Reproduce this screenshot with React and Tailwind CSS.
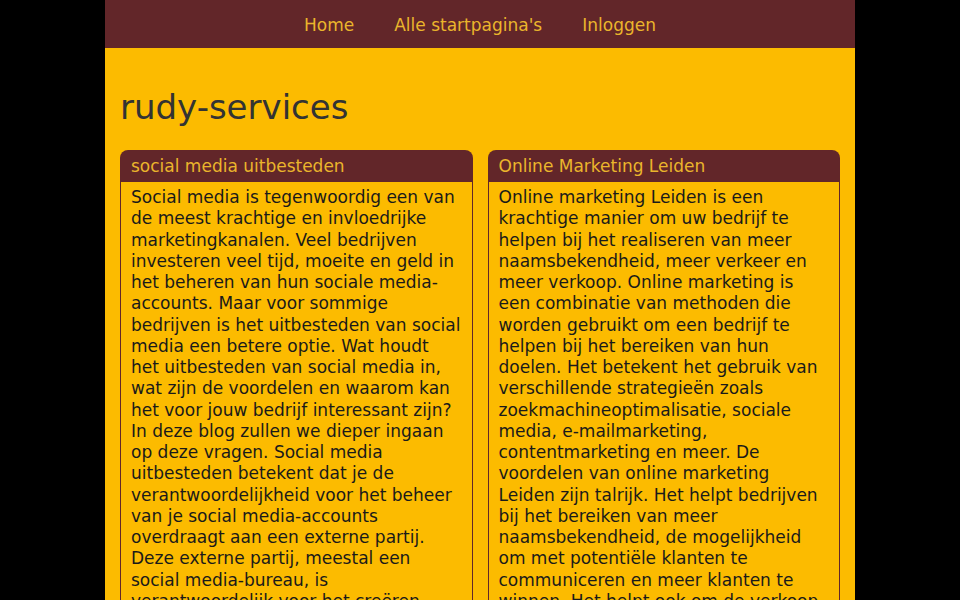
const posts = [
  {
    title: 'social media uitbesteden',
    body:
      'Social media is tegenwoordig een van de meest krachtige en invloedrijke marketingkanalen. Veel bedrijven investeren veel tijd, moeite en geld in het beheren van hun sociale media-accounts. Maar voor sommige bedrijven is het uitbesteden van social media een betere optie. Wat houdt het uitbesteden van social media in, wat zijn de voordelen en waarom kan het voor jouw bedrijf interessant zijn? In deze blog zullen we dieper ingaan op deze vragen. Social media uitbesteden betekent dat je de verantwoordelijkheid voor het beheer van je social media-accounts overdraagt aan een externe partij. Deze externe partij, meestal een social media-bureau, is verantwoordelijk voor het creëren, plaatsen en analyseren van content, het reageren op berichten en het bijhouden van de resultaten.',
  },
  {
    title: 'Online Marketing Leiden',
    body:
      'Online marketing Leiden is een krachtige manier om uw bedrijf te helpen bij het realiseren van meer naamsbekendheid, meer verkeer en meer verkoop. Online marketing is een combinatie van methoden die worden gebruikt om een bedrijf te helpen bij het bereiken van hun doelen. Het betekent het gebruik van verschillende strategieën zoals zoekmachineoptimalisatie, sociale media, e-mailmarketing, contentmarketing en meer. De voordelen van online marketing Leiden zijn talrijk. Het helpt bedrijven bij het bereiken van meer naamsbekendheid, de mogelijkheid om met potentiële klanten te communiceren en meer klanten te winnen. Het helpt ook om de verkoop te verhogen en de klanttevredenheid te verbeteren.',
  },
];

const App = () => {
  return (
    <div className="min-h-screen bg-black font-['DejaVu_Sans',sans-serif]">
      <div className="mx-auto w-[750px] min-h-screen bg-[#fcbb00]">
        <nav className="flex h-12 items-center justify-center gap-10 pt-[3px] bg-[#622629] text-[17px] text-[#eab52c]">
          <a href="#">Home</a>
          <a href="#">Alle startpagina's</a>
          <a href="#">Inloggen</a>
        </nav>

        <main className="px-[15px] pt-10">
          <h1 className="text-[34px] leading-[39px] text-[#333333]">rudy-services</h1>

          <div className="mt-[23px] grid grid-cols-2 gap-[15px]">
            {posts.map(post => (
              <div key={post.title}>
                <h2 className="rounded-t-lg bg-[#622629] px-[11px] pt-[6px] pb-[5px] text-[17px] leading-[20px] text-[#eab52c]">
                  {post.title}
                </h2>
                <p className="border border-[#622629] px-[10px] pt-[5px] pb-2 text-[17px] leading-[1.25] text-[#1a1a1a]">
                  {post.body}
                </p>
              </div>
            ))}
          </div>
        </main>
      </div>
    </div>
  );
};

export default App;
